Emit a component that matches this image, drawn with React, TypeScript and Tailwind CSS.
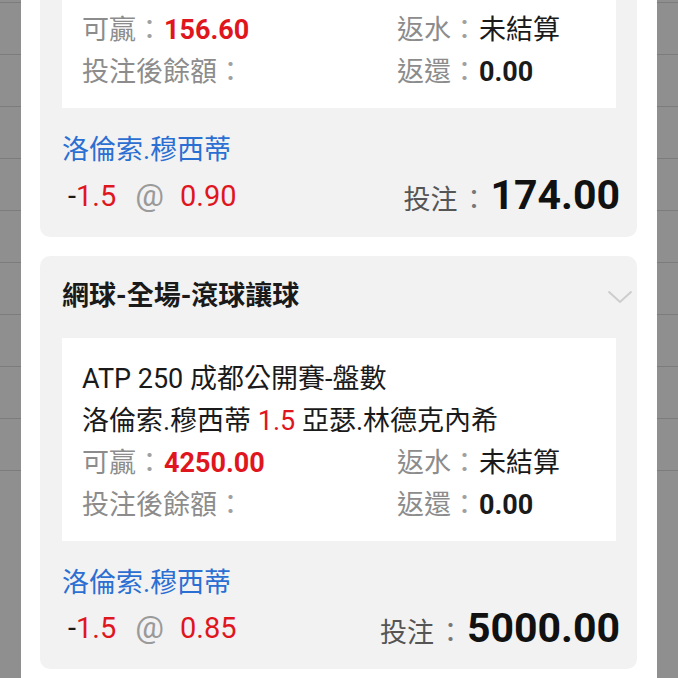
// Bet slip list - settled/unsettled tickets

import React from 'react';

type Ticket = {
  market: string;
  league: string;
  home: string;
  line: string;
  away: string;
  win: string;
  pick: string;
  handicap: string;
  odds: string;
  stake: string;
};

const tickets: Ticket[] = [
  {
    market: '網球-全場-滾球讓球',
    league: 'ATP 250 成都公開賽-盤數',
    home: '洛倫索.穆西蒂',
    line: '1.5',
    away: '亞瑟.林德克內希',
    win: '156.60',
    pick: '洛倫索.穆西蒂',
    handicap: '1.5',
    odds: '0.90',
    stake: '174.00',
  },
  {
    market: '網球-全場-滾球讓球',
    league: 'ATP 250 成都公開賽-盤數',
    home: '洛倫索.穆西蒂',
    line: '1.5',
    away: '亞瑟.林德克內希',
    win: '4250.00',
    pick: '洛倫索.穆西蒂',
    handicap: '1.5',
    odds: '0.85',
    stake: '5000.00',
  },
];

const font = "font-['Roboto','Noto_Sans_CJK_TC',sans-serif]";

function SideStrip() {
  return (
    <div className="w-[21px] shrink-0 bg-[#8f8f8f]">
      <div className="h-[3px] border-b border-[#7c7c7c]" />
      {Array.from({ length: 9 }).map((_, i) => (
        <div key={i} className="h-[52px] border-b border-[#7c7c7c]" />
      ))}
    </div>
  );
}

function Label({ children }: { children: React.ReactNode }) {
  return <span className="text-[#8c8c8c]">{children}</span>;
}

function Colon() {
  return <span className="text-[#a0a0a0] pr-[1px]">：</span>;
}

function TicketCard({ t, className }: { t: Ticket; className?: string }) {
  return (
    <div className={`rounded-[10px] bg-[#f2f2f2] ${className ?? ''}`}>
      {/* Header */}
      <div className="flex items-center justify-between pl-[22px] pr-[4px] pt-[19px] pb-[21px]">
        <span className="text-[27px] leading-[42px] font-bold text-[#1a1a1a]">{t.market}</span>
        <svg width="26" height="14" viewBox="0 0 26 14" fill="none" className="mt-[2px]">
          <path d="M1.5 1.5 L13 12 L24.5 1.5" stroke="#cdcdcd" strokeWidth="2" />
        </svg>
      </div>

      {/* Detail panel */}
      <div className="ml-[22px] mr-[21px] bg-white pl-[20px] pt-[20px] pb-[15px] text-[27px] leading-[42px]">
        <div className="text-[#1a1a1a]">{t.league}</div>
        <div className="text-[#1a1a1a]">
          {t.home} <span className="text-[#e0161e]">{t.line}</span> {t.away}
        </div>
        <div className="grid grid-cols-[315px_1fr]">
          <div>
            <Label>可贏</Label>
            <Colon />
            <span className="font-bold text-[#e0161e]">{t.win}</span>
          </div>
          <div>
            <Label>返水</Label>
            <Colon />
            <span className="text-[#1a1a1a]">未結算</span>
          </div>
          <div>
            <Label>投注後餘額</Label>
            <Colon />
          </div>
          <div>
            <Label>返還</Label>
            <Colon />
            <span className="font-bold text-[#1a1a1a]">0.00</span>
          </div>
        </div>
      </div>

      {/* Pick + stake */}
      <div className="pl-[22px] pr-[17px] pt-[21px] pb-[16px]">
        <div className="text-[27px] leading-[42px] text-[#2b6fd2]">{t.pick}</div>
        <div className="flex items-end justify-between">
          <div className="pl-[6px] mb-[5px] text-[29px] leading-[40px]">
            <span className="text-[#1a1a1a]">-</span>
            <span className="text-[#e0161e]">{t.handicap}</span>
            <span className="text-[#9a9a9a] text-[32px] leading-[40px] pl-[19px] pr-[16px]">@</span>
            <span className="text-[#e0161e]">{t.odds}</span>
          </div>
          <div className="flex items-baseline">
            <span className="text-[27px] text-[#555]">投注</span>
            <span className="text-[27px] text-[#777] px-[3px]">：</span>
            <span className="text-[41px] leading-[48px] font-bold text-[#111]">{t.stake}</span>
          </div>
        </div>
      </div>
    </div>
  );
}

export default function App() {
  return (
    <div className={`flex h-[678px] w-[678px] overflow-hidden bg-white ${font}`}>
      <SideStrip />
      <div className="flex-1 pl-[19px] pr-[20px]">
        <TicketCard t={tickets[0]} className="mt-[-177px]" />
        <TicketCard t={tickets[1]} className="mt-[19px]" />
      </div>
      <SideStrip />
    </div>
  );
}
